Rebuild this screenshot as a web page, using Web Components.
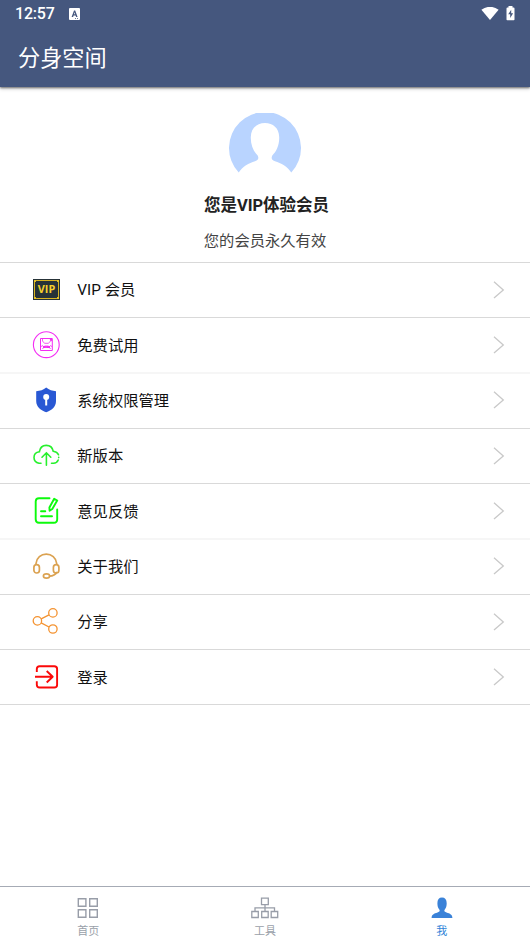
<!DOCTYPE html>
<html lang="zh-CN">
<head>
<meta charset="utf-8">
<title>分身空间</title>
<style>
html,body{margin:0;height:100%;background:#fff}
body{font-family:Roboto,"Noto Sans CJK SC",sans-serif}
</style>
</head>
<body>
<app-screen></app-screen>
<script>
const define = (name, html) => {
  const t = document.createElement('template');
  t.innerHTML = html;
  customElements.define(name, class extends HTMLElement {
    constructor() {
      super();
      this.attachShadow({ mode: 'open' }).append(t.content.cloneNode(true));
    }
  });
};

define('status-bar', `
<style>
:host{display:flex;align-items:center;height:27px;box-sizing:border-box;padding:0 15px;color:#fff;font:500 16px/27px Roboto,sans-serif}
.t{width:54px;letter-spacing:-.2px}
svg{display:block}
.wifi{margin-left:auto;margin-right:7px}
</style>
<span class="t">12:57</span>
<svg width="11" height="12" viewBox="0 0 11 12"><path fill="#fff" fill-rule="evenodd" d="M1 0h9q1 0 1 1v10q0 1-1 1H1q-1 0-1-1V1q0-1 1-1zM5 2.4 2.6 9h1.5l.5-1.5h2L7.100 9h1.500L6.200 2.400zM5.600 4.200l.6 2H5zM6 10v.8h1V10zM8 10v.8h1V10z"/></svg>
<svg class="wifi" width="18" height="14" viewBox="0 0 18 14"><path fill="#fff" d="M.4 2.800Q9-3.200 17.600 2.800L9 13z"/></svg>
<svg width="9" height="15" viewBox="0 0 9 15"><path fill="#fff" fill-rule="evenodd" d="M2.500 0h4v1.500H7.500q1 0 1 1V13.500q0 .8-.8.8H1.300q-.8 0-.8-.8V2.500q0-1 1-1h1zM5.200 3.700 2.200 8.300h2v3.600l2.900-4.700H5.200z"/></svg>
`);

define('app-header', `
<style>
:host{display:block;height:87px;background:#45577e;color:#fff;position:relative;z-index:1;box-shadow:0 1px 2px rgba(0,0,0,.5),0 2px 4px rgba(0,0,0,.16)}
h1{margin:0;padding-left:18px;font:400 22.2px/62px Roboto,"Noto Sans CJK SC",sans-serif}
</style>
<status-bar></status-bar>
<h1><slot></slot></h1>
`);

define('member-profile', `
<style>
:host{display:flex;flex-direction:column;align-items:center;height:176px;box-sizing:border-box;padding-top:26px;border-bottom:1px solid #d9d9d9}
svg{display:block}
.name{margin-top:21px;padding-left:3px;font-size:16.500px;line-height:24px;font-weight:700;color:#222}
.note{margin-top:12px;font-size:15.300px;line-height:22px;color:#444}
</style>
<svg width="72" height="60" viewBox="0 0 72 60"><path fill="#b9d4ff" d="M9.700 59.600A36 36 0 1 1 62.300 59.600C58.500 53.500 52 50 46 48.300 42 47 42.300 44.500 43.300 42.500 47.500 38.500 50.500 32 50.200 24 50 15 44 10 36 10S22 15 21.800 24C21.500 32 24.500 38.500 28.700 42.500 29.700 44.500 30 47 26 48.300 20 50 13.500 53.500 9.700 59.600z"/></svg>
<div class="name"><slot name="name"></slot></div>
<div class="note"><slot name="note"></slot></div>
`);

define('menu-row', `
<style>
:host{display:flex;align-items:center;height:55px;box-sizing:border-box;padding:0 25px 0 32px;border-bottom:1px solid #d9d9d9;color:#111;font-size:15.300px}
:host([soft]){height:56px;border-bottom:2px solid #f6f6f6}
.label{margin-left:17.300px;flex:1;line-height:24px}
:host([low]) .label{padding-top:2px}
:host([high]) .chevron{margin-bottom:2px}
::slotted(svg){display:block;flex:none}
</style>
<slot name="icon"></slot>
<span class="label"><slot></slot></span>
<svg class="chevron" width="13" height="20" viewBox="0 0 13 20" fill="none" stroke="#c9c9c9" stroke-width="1.300"><path d="M2 1.800 11.300 10 2 18"/></svg>
`);

define('tab-item', `
<style>
:host{display:flex;flex-direction:column;align-items:center;flex:1;color:#9a9fa9;font-size:11px}
:host([active]){color:#2f84d8}
::slotted(svg){display:block;margin-top:9px}
span{line-height:16px;margin-top:4px}
</style>
<slot name="icon"></slot>
<span><slot></slot></span>
`);

define('tab-bar', `
<style>:host{display:flex;height:56px;box-sizing:border-box;border-top:1px solid #a6abb5;background:#fff}</style>
<slot></slot>
`);

define('app-screen', `
<style>
:host{display:flex;flex-direction:column;height:942px;width:530px;overflow:hidden;background:#fff}
main{flex:1}
</style>
<app-header>分身空间</app-header>
<main>
<member-profile><span slot="name">您是VIP体验会员</span><span slot="note">您的会员永久有效</span></member-profile>

<menu-row><svg slot="icon" width="28" height="28" viewBox="0 0 28 28"><path fill="#263238" d="M1 3h27v21H1z"/><path fill="none" stroke="#d8b422" d="M4.500 4.500h20l2 2v14l-2 2h-20l-2-2v-14z"/><path fill="#e8c32a" d="M2 4h3L2 7zM27 4h-3l3 3zM2 23h3l-3-3zM27 23h-3l3-3z"/><text x="14.500" y="17.300" text-anchor="middle" textLength="17.500" lengthAdjust="spacingAndGlyphs" font-family="Open Sans, sans-serif" font-size="11" font-weight="700" fill="#f5cf2c">VIP</text></svg>VIP 会员</menu-row>

<menu-row soft low><svg slot="icon" width="28" height="28" viewBox="0 0 28 28" fill="none" stroke="#f32df3"><circle cx="14.300" cy="13.700" r="12.900" stroke-width="1.100"/><path d="M8.500 7.500h11.800v12H8.500z"/><path stroke-width=".8" d="M10.500 8v2l2 2.300h4l2-2.300V8M10.500 18l2-3h4l2 3M12 17l2-2 2 2M9 15.500l2-1M20 15.500l-2-1"/><path fill="#f32df3" stroke="none" d="M11 15h2l1 1.500 1-1.500h3v2h-7zM17.500 8h2.500v2.500z"/></svg>免费试用</menu-row>

<menu-row high><svg slot="icon" width="28" height="28" viewBox="0 0 28 28"><path fill="#2958d4" d="M14.200.6C17 3 20.500 4 24 4.200V14C24 20 19.500 23.500 14.200 25.300 9 23.500 4.200 20 4.200 14V4.200C8 4 11.500 3 14.200.6z"/><circle cx="14.200" cy="10" r="3" fill="#fff"/><path fill="#fff" d="M13.200 11h2v7.500h-2z"/></svg>系统权限管理</menu-row>

<menu-row><svg slot="icon" width="28" height="28" viewBox="0 0 28 28" fill="none" stroke="#27f02d" stroke-width="1.600" stroke-linecap="round"><path d="M9 21.300H7C3.800 20.600 2 18.500 2 15.500 2 12.300 4.300 10 7.400 9.700 8 5.800 10.700 3.400 14.200 3.400 17.800 3.400 20.500 5.800 21.200 9.200 23.700 9.500 25.700 10.800 26.500 12.700M26.700 15.300v.3M26.200 18C25.400 20 23.700 21.300 21.500 21.300H19.500M14.400 23.300V11M10 15.200 14.400 10.800 18.800 15.200"/></svg>新版本</menu-row>

<menu-row soft low><svg slot="icon" width="28" height="28" viewBox="0 0 28 28" fill="none" stroke="#0cfa0c" stroke-width="1.900" stroke-linecap="round" stroke-linejoin="round"><path d="M17.500 1.200H7Q3.700 1.200 3.700 4.500V22.300Q3.700 25.800 7 25.800H21.800Q25.200 25.800 25.200 22.300V12.500M9 14.300h4.300M9 19.200h11M22.200 1.800 17.400 10.500 17.600 13.700 20.300 12 25.200 3.500z"/></svg>意见反馈</menu-row>

<menu-row high><svg slot="icon" width="28" height="28" viewBox="0 0 28 28" fill="none" stroke="#dba251" stroke-width="1.700"><path d="M4 12V10.500C4.600 4.700 9 1.200 14.300 1.200S24 4.700 24.700 10.500V12M25 19C23.500 21.500 21 23 17.500 23.200"/><rect x="1.900" y="11.700" width="5.500" height="8.300" rx="2.700"/><rect x="21.400" y="11.700" width="5.500" height="8.300" rx="2.700"/><ellipse cx="14.500" cy="23" rx="3.100" ry="2.200"/></svg>关于我们</menu-row>

<menu-row><svg slot="icon" width="28" height="28" viewBox="0 0 28 28" fill="none" stroke="#f49331" stroke-width="1.300"><circle cx="5.400" cy="12.900" r="4.200"/><circle cx="20.900" cy="4.900" r="4.200"/><circle cx="20.900" cy="21" r="4.200"/><path d="M9.200 10.900 17 6.900M9.200 14.900 17 19"/></svg>分享</menu-row>

<menu-row low><svg slot="icon" width="28" height="28" viewBox="0 0 28 28" fill="none" stroke="#fb0909" stroke-width="1.900" stroke-linejoin="round"><path d="M4.800 9V6Q4.800 3.200 7.600 3.200H22.300Q25.100 3.200 25.100 6V21.700Q25.100 24.500 22.300 24.500H7.600Q4.800 24.500 4.800 21.700V18.200M3 13.700H20.500M14.700 8 20.700 13.700 14.700 19.500"/></svg>登录</menu-row>
</main>
<tab-bar>
<tab-item><svg slot="icon" width="28" height="24" viewBox="0 0 28 24" fill="none" stroke="#989da8" stroke-width="1.400"><path d="M4.300 2.700h7.600v7.600H4.300zM15.700 2.700h7.600v7.600h-7.600zM4.300 13.700h7.600v7.600H4.300zM15.700 13.700h7.600v7.600h-7.600z"/></svg>首页</tab-item>
<tab-item><svg slot="icon" width="28" height="24" viewBox="0 0 28 24" fill="none" stroke="#989da8" stroke-width="1.300"><path d="M10.500 2.200h6.800v6.500h-6.800zM.8 15.500h6.500v6H.8zM10.700 15.500h6.500v6h-6.500zM20.200 15.500h6.500v6h-6.500zM14 8.700v6.800M4 15.500v-3.700h19.500v3.700"/></svg>工具</tab-item>
<tab-item active><svg slot="icon" width="28" height="24" viewBox="0 0 28 24"><path fill="#3a82d8" d="M3.600 22C3.600 18.500 6 17.700 9.500 16.500 12 15.700 12 14.700 11.300 13.500 10 12 9.400 10 9.400 7.200 9.400 3.500 11 1.600 14 1.600S18.700 3.500 18.700 7.200C18.700 10 18 12 16.800 13.500 16 14.700 16 15.700 18.500 16.500 22 17.700 24.400 18.500 24.400 22z"/></svg>我</tab-item>
</tab-bar>
`);
</script>
</body>
</html>
